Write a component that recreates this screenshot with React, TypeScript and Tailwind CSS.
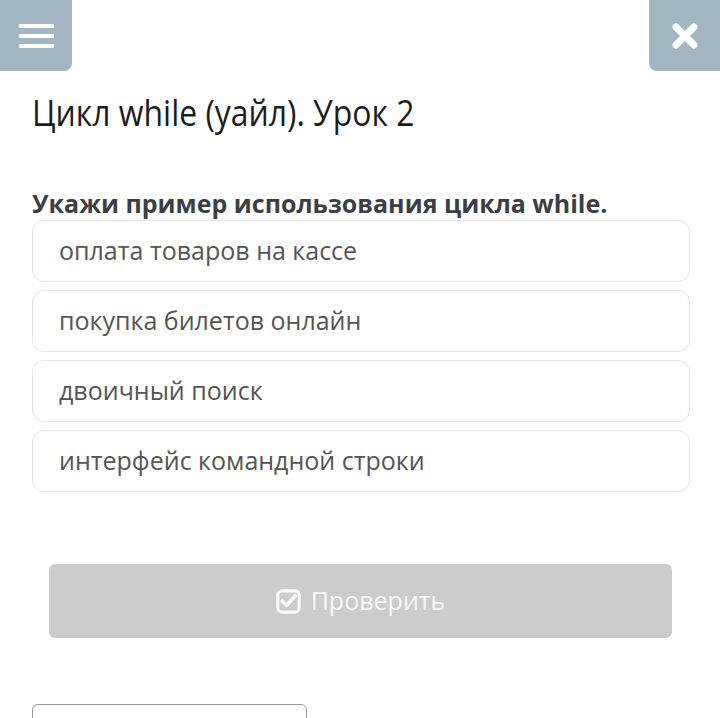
const options = [
  'оплата товаров на кассе',
  'покупка билетов онлайн',
  'двоичный поиск',
  'интерфейс командной строки',
];

export default function App() {
  return (
    <div className="relative h-[718px] w-[720px] overflow-hidden bg-white font-['Open_Sans',sans-serif]">
      <div className="flex items-start justify-between">
        <button className="flex h-[71px] w-[72px] flex-col items-center justify-center gap-[6px] rounded-br-lg bg-[#a2b5c3]">
          <span className="block h-[4px] w-[35px] bg-white" />
          <span className="block h-[4px] w-[35px] bg-white" />
          <span className="block h-[4px] w-[35px] bg-white" />
        </button>
        <button className="flex h-[71px] w-[71px] items-center justify-center rounded-bl-lg bg-[#a2b5c3]">
          <svg width="26" height="26" viewBox="0 0 26 26">
            <path d="M4 4 L22 22 M22 4 L4 22" stroke="white" strokeWidth="7" strokeLinecap="round" />
          </svg>
        </button>
      </div>

      <div className="px-8">
        <h1 className="mt-[18px] text-[36px] leading-[48px] text-[#1c1c1c]">
          <span className="inline-block origin-left scale-x-[0.886]">Цикл while (уайл). Урок 2</span>
        </h1>
        <p className="mt-[49px] text-[25px] leading-[34px] font-bold text-[#3b3f45]">
          Укажи пример использования цикла while.
        </p>
        <div className="mr-[-2px] flex flex-col gap-[8px]">
          {options.map(o => (
            <div key={o} className="flex h-[62px] items-center rounded-xl border border-[#e4e4e4] px-[26px] text-[25px] text-[#555]">
              {o}
            </div>
          ))}
        </div>
      </div>

      <div className="mt-[72px] px-[49px] pr-[48px]">
        <button className="flex h-[74px] w-full items-center justify-center gap-[10px] rounded-md bg-[#cccccc] text-[25px] text-[#f7f7f7]">
          <svg width="25" height="25" viewBox="0 0 24 24" fill="none" stroke="#f7f7f7">
            <rect x="1.75" y="1.75" width="20.5" height="20.5" rx="4" strokeWidth="3" />
            <path d="M6 11.5 L10.2 15.8 L18.5 6.5" strokeWidth="3.6" strokeLinecap="round" strokeLinejoin="round" />
          </svg>
          Проверить
        </button>
      </div>

      <div className="ml-8 mt-[66px] h-[40px] w-[275px] rounded-md border border-[#999]" />
    </div>
  );
}
